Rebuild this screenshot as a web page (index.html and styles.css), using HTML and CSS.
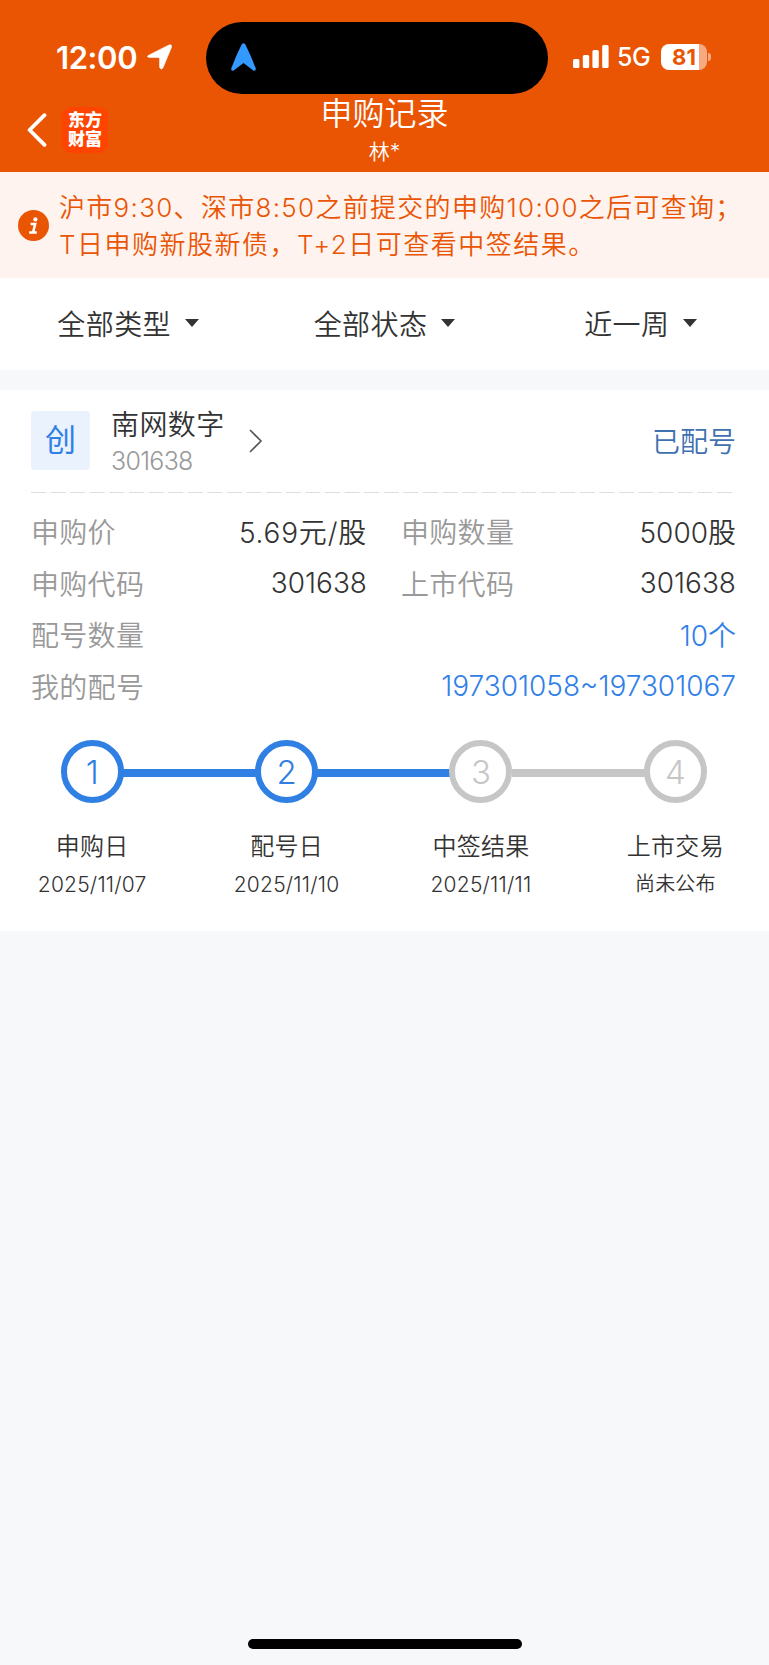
FILE: index.html
```html
<!DOCTYPE html>
<html lang="zh-CN">
<head>
	<meta charset="UTF-8">
	<title>申购记录</title>
	<link rel="stylesheet" href="styles.css">
</head>
<body>
	<!--头部-->
	<div class="header">
		<div class="status">
			<div class="status-left">
				<span class="time">12:00</span>
				<svg class="loc" width="25" height="26" viewBox="0 0 25 26"><path d="M1.6 11.3 22 1Q25.2 0 24.4 3.4L16 23.8Q14.2 26.4 12.6 23.4V14.8Q12.6 13.4 11.2 13.4H2Q-1 12.7 1.6 11.3Z" fill="#fff" stroke="#fff" stroke-width=".6"/></svg>
			</div>
			<div class="island">
				<svg width="25" height="28" viewBox="0 0 25 28"><path d="M10.6 1.6Q12.5-1 14.4 1.6 20 13 24.8 25.4 25.1 28.4 22.3 27.4L12.5 20 2.7 27.4Q-.1 28.4.2 25.4 5 13 10.6 1.6Z" fill="#3399ff"/></svg>
			</div>
			<div class="status-right">
				<svg class="signal" width="36" height="24" viewBox="0 0 36 24" fill="#fff"><rect x="0" y="14" width="6.4" height="9" rx="1.6"/><rect x="9.8" y="10" width="6.4" height="13" rx="1.6"/><rect x="19.4" y="5" width="6.4" height="18" rx="1.6"/><rect x="29.2" y="0" width="6.4" height="23" rx="1.6"/></svg>
				<span class="net">5G</span>
				<span class="battery">81</span>
				<i class="nub"></i>
			</div>
		</div>
		<div class="nav">
			<div class="nav-left">
				<svg width="20" height="34" viewBox="0 0 20 34"><path d="M17.5 2.2 2.6 17 17.5 31.8" fill="none" stroke="#fff" stroke-width="3.8" stroke-linecap="round" stroke-linejoin="round"/></svg>
				<div class="logo">东方<br>财富</div>
			</div>
			<div class="nav-title">
				<h1>申购记录</h1>
				<p>林*</p>
			</div>
		</div>
	</div>

	<!--提示-->
	<div class="notice">
		<svg width="31" height="31" viewBox="0 0 31 31"><circle cx="15.5" cy="15.5" r="15.5" fill="#ea5504"/><circle cx="17.4" cy="9.4" r="2.1" fill="#fff"/><path d="M12.6 14H17.2L15 22.6M11.2 22.6H18.8" fill="none" stroke="#fff" stroke-width="2.5"/></svg>
		<p>沪市9:30、深市8:50之前提交的申购10:00之后可查询；<br><span class="line2">T日申购新股新债，T+2日可查看中签结果。</span></p>
	</div>

	<!--筛选-->
	<ul class="filter">
		<li>全部类型<i></i></li>
		<li>全部状态<i></i></li>
		<li>近一周<i></i></li>
	</ul>

	<!--申购卡片-->
	<div class="card">
		<div class="stock">
			<div class="tag">创</div>
			<div class="name">
				<h2>南网数字</h2>
				<p>301638</p>
			</div>
			<svg class="more" width="14" height="24" viewBox="0 0 14 24"><path d="M1 1 12 12 1 23" fill="none" stroke="#555" stroke-width="1.6"/></svg>
			<div class="state">已配号</div>
		</div>
		<svg class="dash" width="705" height="1" viewBox="0 0 705 1"><path d="M0 .5H702" stroke="#ddd" stroke-width="1" stroke-dasharray="15 4.6"/></svg>
		<div class="info">
			<div class="row"><span>申购价</span><b class="price">5.69元/股</b></div>
			<div class="row"><span>申购数量</span><b>5000股</b></div>
			<div class="row"><span>申购代码</span><b>301638</b></div>
			<div class="row"><span>上市代码</span><b>301638</b></div>
			<div class="row wide"><span>配号数量</span><b>10个</b></div>
			<div class="row wide"><span>我的配号</span><b>197301058~197301067</b></div>
		</div>
		<ul class="steps">
			<li class="on"><em>1</em><h3>申购日</h3><p>2025/11/07</p></li>
			<li class="on"><em>2</em><h3>配号日</h3><p>2025/11/10</p></li>
			<li><em>3</em><h3>中签结果</h3><p>2025/11/11</p></li>
			<li><em>4</em><h3>上市交易</h3><p class="none">尚未公布</p></li>
		</ul>
	</div>

	<div class="home"></div>
</body>
</html>
```
FILE: styles.css
```css
*{
	padding: 0;
	margin: 0;
	box-sizing: border-box;
}
body{
	display: flex;
	flex-direction: column;
	height: 1665px;
	background-color: #f6f8fa;
	color: #333;
	font-family: Inter,"Noto Sans CJK SC",sans-serif;
	font-weight: 350;
	overflow: hidden;
}
ul{
	list-style: none;
}
h1,h2,h3,b,em{
	font-weight: 350;
	font-style: normal;
}
svg{
	display: block;
	flex: none;
}
/*头部*/
.header{
	height: 172px;
	background-color: #ea5504;
	color: #fff;
}
.status{
	display: flex;
	height: 94px;
	padding-top: 22px;
}
.status-left{
	display: flex;
	align-items: center;
	width: 206px;
	padding-left: 56px;
	padding-bottom: 2px;
}
.time{
	width: 91px;
	font-size: 31px;
	font-weight: 600;
	letter-spacing: -0.4px;
}
.island{
	display: flex;
	align-items: center;
	width: 342px;
	height: 72px;
	padding-left: 25px;
	padding-bottom: 3px;
	border-radius: 36px;
	background-color: #000;
}
.status-right{
	display: flex;
	align-items: center;
	padding-left: 25px;
	padding-bottom: 2px;
}
.net{
	width: 52px;
	padding-left: 8px;
	font-size: 25px;
	font-weight: 450;
	letter-spacing: -0.5px;
}
.battery{
	width: 46px;
	height: 26px;
	border-radius: 8px;
	background: linear-gradient(to right,#fff 38px,#f7aa82 38px);
	color: #ea5504;
	font-size: 22px;
	font-weight: 700;
	line-height: 26px;
	text-align: center;
}
.nub{
	width: 3px;
	height: 8px;
	margin-left: 1px;
	border-radius: 0 3px 3px 0;
	background-color: #f7aa82;
}
.nav{
	display: grid;
	grid-template-columns: 1fr 200px 1fr;
	height: 78px;
}
.nav-left{
	display: flex;
	align-items: center;
	height: 71px;
	padding-left: 27px;
}
.logo{
	width: 46px;
	height: 46px;
	margin-left: 15px;
	padding-top: 4px;
	border-radius: 9px;
	background-color: #ff4400;
	font-size: 17px;
	font-weight: 900;
	line-height: 19px;
	text-align: center;
}
.nav-title{
	padding-top: 1px;
	text-align: center;
}
.nav-title h1{
	font-size: 32px;
	line-height: 38px;
}
.nav-title p{
	font-size: 21px;
	line-height: 38px;
}
/*提示*/
.notice{
	display: flex;
	align-items: center;
	height: 106px;
	padding-left: 18px;
	background-color: #fef3ee;
	color: #ea5504;
}
.notice p{
	margin-left: 10px;
	padding-top: 2px;
	font-size: 26px;
	line-height: 37px;
	letter-spacing: 1.3px;
	white-space: nowrap;
}
.line2{
	letter-spacing: 1.5px;
}
/*筛选*/
.filter{
	display: grid;
	grid-template-columns: repeat(3,1fr);
	height: 92px;
	padding-bottom: 2px;
	margin-bottom: 20px;
	background-color: #fff;
}
.filter li{
	display: flex;
	align-items: center;
	justify-content: center;
	font-size: 28px;
	letter-spacing: 0.4px;
}
.filter i{
	margin-left: 14px;
	border: 7px solid transparent;
	border-top: 8px solid #333;
	border-bottom: 0;
}
/*卡片*/
.card{
	height: 541px;
	padding: 19px 33px 0 31px;
	background-color: #fff;
}
.stock{
	display: flex;
	align-items: center;
	height: 64px;
}
.tag{
	width: 59px;
	height: 59px;
	margin-bottom: 1px;
	border-radius: 4px;
	background-color: #e9f2fd;
	color: #3080e8;
	font-size: 31px;
	font-weight: 400;
	line-height: 57px;
	text-align: center;
}
.name{
	width: 138px;
	margin-left: 21px;
	padding-top: 3px;
}
.name h2{
	font-size: 28px;
	line-height: 36px;
	letter-spacing: 0.4px;
}
.name p{
	color: #999;
	font-size: 25px;
	line-height: 36px;
	letter-spacing: -0.7px;
}
.state{
	margin-left: auto;
	padding-bottom: 2px;
	color: #3f70b0;
	font-size: 28px;
}
.dash{
	margin: 19px 0 12px;
}
.info{
	display: grid;
	grid-template-columns: 336px 335px;
	grid-auto-rows: 51.7px;
	column-gap: 34px;
}
.row{
	display: flex;
	align-items: center;
	justify-content: space-between;
	font-size: 28px;
}
.row span{
	color: #999;
	letter-spacing: 0.3px;
}
.row .price{
	letter-spacing: 0.8px;
}
.wide{
	grid-column: 1 / 3;
}
.wide b{
	color: #3080e8;
}
/*步骤*/
.steps{
	display: grid;
	grid-template-columns: repeat(4,194.4px);
	margin: 28px 0 0 -36px;
	text-align: center;
}
.steps li{
	position: relative;
}
.steps em{
	display: block;
	width: 63px;
	height: 63px;
	margin: 0 auto;
	border: 6px solid #c6c6c6;
	border-radius: 50%;
	color: #c6c6c6;
	font-size: 33px;
	line-height: 52px;
}
.steps .on em{
	border-color: #3080e4;
	color: #3080e4;
}
/*连接线*/
.steps li:not(:last-child)::after{
	content: "";
	position: absolute;
	top: 29px;
	left: 128px;
	width: 133px;
	height: 8px;
	background-color: #c6c6c6;
}
.steps .on:not(:last-child)::after{
	background-color: #3080e4;
}
.steps h3{
	margin-top: 25px;
	font-size: 24px;
	line-height: 38px;
	letter-spacing: 0.3px;
}
.steps p{
	font-size: 21px;
	line-height: 37px;
	letter-spacing: 0.2px;
}
.steps .none{
	font-size: 20px;
}
/*底部横条*/
.home{
	width: 274px;
	height: 10px;
	margin: auto auto 16px;
	border-radius: 5px;
	background-color: #000;
}
```
